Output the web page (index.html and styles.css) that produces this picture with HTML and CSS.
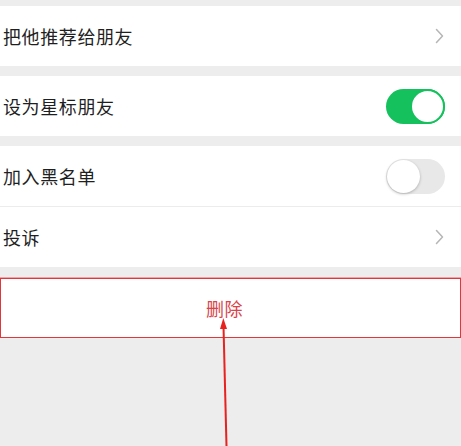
FILE: index.html
```html
<!DOCTYPE html>
<html lang="zh-CN">
<head>
<meta charset="utf-8">
<title>资料设置</title>
<link rel="stylesheet" href="styles.css">
</head>
<body>
<div class="page">
  <div class="group">
    <div class="row">
      <span class="label">把他推荐给朋友</span>
      <svg class="chevron" width="9" height="16" viewBox="0 0 9 16"><path d="M1.5 1.5 L7.5 8 L1.5 14.5" fill="none" stroke="#b6b6b6" stroke-width="1.5" stroke-linecap="round" stroke-linejoin="round"/></svg>
    </div>
  </div>
  <div class="group">
    <div class="row">
      <span class="label">设为星标朋友</span>
      <span class="switch on"><span class="knob"></span></span>
    </div>
  </div>
  <div class="group">
    <div class="row">
      <span class="label">加入黑名单</span>
      <span class="switch"><span class="knob"></span></span>
    </div>
    <div class="row bordered">
      <span class="label">投诉</span>
      <svg class="chevron" width="9" height="16" viewBox="0 0 9 16"><path d="M1.5 1.5 L7.5 8 L1.5 14.5" fill="none" stroke="#b6b6b6" stroke-width="1.5" stroke-linecap="round" stroke-linejoin="round"/></svg>
    </div>
  </div>
  <div class="danger">删除</div>
  <svg class="arrow" width="461" height="446" viewBox="0 0 461 446">
    <line x1="226.5" y1="446" x2="223.5" y2="326" stroke="#e8231f" stroke-width="2"/>
    <polygon points="223.3,318 220,329 227,329" fill="#e8231f"/>
  </svg>
</div>
</body>
</html>
```
FILE: styles.css
```css
html, body {
  margin: 0;
  padding: 0;
}
body {
  background: #ededed;
  font-family: "Noto Sans CJK SC", "Noto Sans", sans-serif;
  color: #1f1f1f;
}
.page {
  position: relative;
  width: 461px;
  height: 446px;
  overflow: hidden;
  padding-top: 6px;
  box-sizing: border-box;
  display: flex;
  flex-direction: column;
  gap: 10px;
}
.group {
  background: #fff;
  display: flex;
  flex-direction: column;
}
.row {
  height: 60px;
  display: flex;
  align-items: center;
  justify-content: space-between;
  padding: 0 16px 0 3px;
  box-sizing: border-box;
}
.row.bordered {
  border-top: 1px solid #ececec;
  height: 61px;
}
.label {
  font-size: 18px;
  line-height: 1;
  letter-spacing: 0.6px;
}
.chevron {
  margin-right: 1px;
  display: block;
}
.switch {
  width: 59px;
  height: 35px;
  border-radius: 18px;
  background: #e8e8e8;
  position: relative;
  box-sizing: border-box;
  display: flex;
  align-items: center;
  padding: 1px;
}
.switch .knob {
  width: 33px;
  height: 33px;
  border-radius: 50%;
  background: #fff;
  box-sizing: border-box;
  box-shadow: 0 1px 3px rgba(0,0,0,0.25);
}
.switch.on {
  background: #14c15c;
  justify-content: flex-end;
}
.switch.on .knob {
  box-shadow: none;
  border: 2px solid #14c15c;
  width: 35px;
  height: 35px;
  margin: -1px;
}
.danger {
  height: 60px;
  margin-top: 1px;
  background: #fff;
  border: 1px solid #e0363c;
  box-shadow: 0 -1px 0 #f0a3a6;
  box-sizing: border-box;
  display: flex;
  align-items: center;
  justify-content: center;
  color: #d9444a;
  font-size: 18px;
  letter-spacing: 0.5px;
  padding-right: 12px;
}
.arrow {
  position: absolute;
  left: 0;
  top: 0;
  pointer-events: none;
}
```
